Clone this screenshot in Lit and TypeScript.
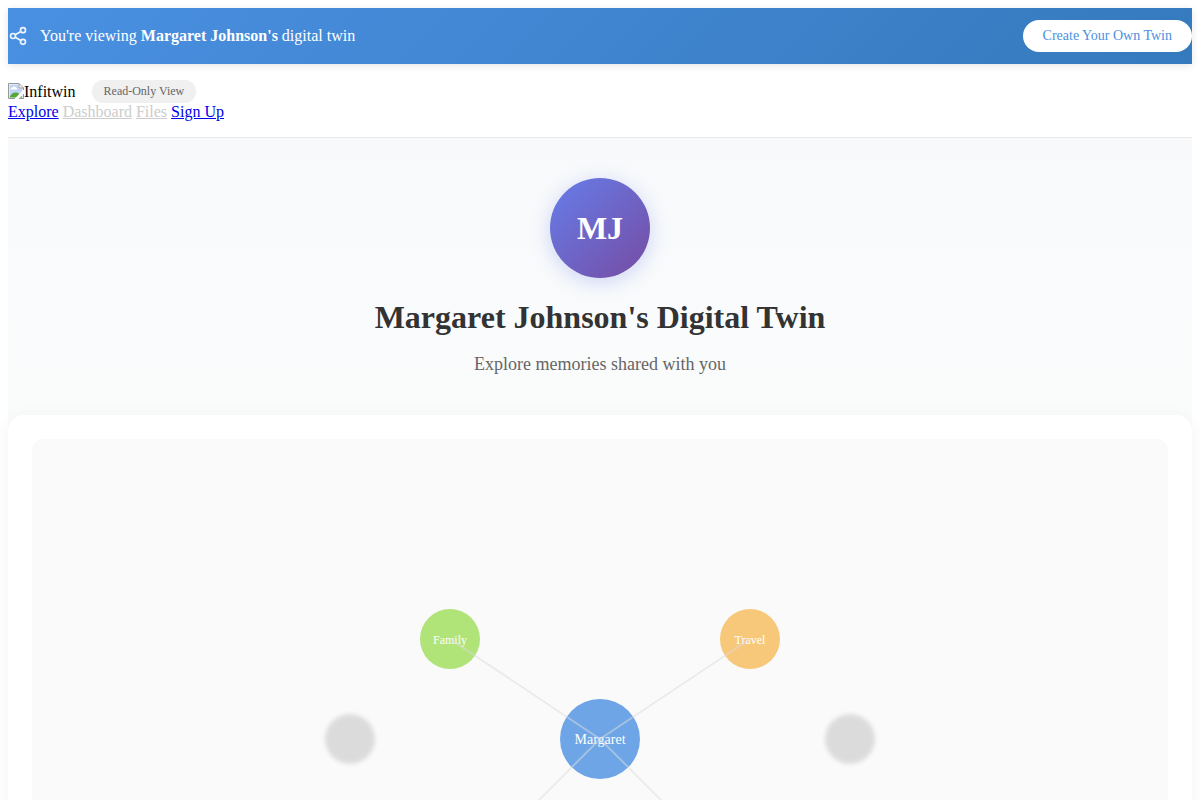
import { LitElement, html, css, svg } from "lit";
import { customElement } from "lit/decorators.js";

interface MemoryNode {
  x: number;
  y: number;
  r: number;
  label: string;
  kind: string;
  size: string;
}

const NODES: MemoryNode[] = [
  { x: 400, y: 300, r: 40, label: "Margaret", kind: "self", size: "large" },
  { x: 250, y: 200, r: 30, label: "Family", kind: "family", size: "small" },
  { x: 550, y: 200, r: 30, label: "Travel", kind: "travel", size: "small" },
];

const LOCKED = [
  { x: 150, y: 300 },
  { x: 650, y: 300 },
];

const LINKS = [
  { x: 250, y: 200 },
  { x: 550, y: 200 },
  { x: 250, y: 450 },
  { x: 550, y: 450 },
];

@customElement("memory-graph")
export class MemoryGraph extends LitElement {
  static styles = css`
    :host {
      display: flex;
      justify-content: center;
      height: 600px;
      border-radius: 12px;
      background: #fafafa;
      overflow: hidden;
    }
    .canvas {
      width: 800px;
      max-width: 100%;
      height: 100%;
    }
    .self {
      fill: #4a90e2;
      opacity: 0.8;
    }
    .family {
      fill: #7ed321;
      opacity: 0.6;
    }
    .travel {
      fill: #f5a623;
      opacity: 0.6;
    }
    .locked {
      fill: #cccccc;
      opacity: 0.65;
      filter: blur(2px);
    }
    .label {
      fill: #ffffff;
      text-anchor: middle;
      font-family: "Liberation Serif", "Times New Roman", serif;
    }
    .large {
      font-size: 14px;
    }
    .small {
      font-size: 12px;
    }
    .link {
      stroke: #dddddd;
      stroke-width: 2;
      opacity: 0.5;
    }
  `;

  render() {
    return html`
      <svg class="canvas" viewBox="0 0 800 600" role="img">
        ${NODES.map(
          (n) => svg`
            <circle class=${n.kind} cx=${n.x} cy=${n.y} r=${n.r}></circle>
            <text class="label ${n.size}" x=${n.x} y=${n.y + 5}>${n.label}</text>
          `
        )}
        ${LOCKED.map((n) => svg`<circle class="locked" cx=${n.x} cy=${n.y} r="25"></circle>`)}
        ${LINKS.map((n) => svg`<line class="link" x1="400" y1="300" x2=${n.x} y2=${n.y}></line>`)}
      </svg>
    `;
  }
}

@customElement("app-root")
export class AppRoot extends LitElement {
  static styles = css`
    :host {
      display: block;
      padding: 8px;
      background: #ffffff;
      color: #000000;
      font-family: "Liberation Serif", "Times New Roman", serif;
      font-size: 16px;
      line-height: 18px;
    }
    .banner {
      display: flex;
      align-items: center;
      justify-content: space-between;
      padding: 12px 0;
      background: linear-gradient(135deg, #4a90e2 0%, #357abd 100%);
      box-shadow: 0 2px 8px rgba(0, 0, 0, 0.1);
      color: #ffffff;
    }
    .notice {
      display: flex;
      align-items: center;
      gap: 12px;
    }
    .share {
      width: 20px;
      height: 20px;
      opacity: 0.9;
    }
    .create {
      padding: 8px 20px;
      border: none;
      border-radius: 20px;
      background: #ffffff;
      color: #4a90e2;
      font-family: inherit;
      font-size: 14px;
      line-height: 16px;
      cursor: pointer;
    }
    .header {
      padding: 16px 0;
      border-bottom: 1px solid #e8e8e8;
    }
    .brand {
      display: flex;
      align-items: center;
      gap: 16px;
    }
    .logo {
      display: flex;
      align-items: center;
      line-height: 19px;
    }
    .picture {
      width: 16px;
      height: 16px;
      margin-bottom: 1px;
    }
    .badge {
      padding: 4px 12px;
      border-radius: 12px;
      background: #f0f0f0;
      color: #666666;
      font-size: 12px;
      line-height: 15px;
    }
    .link {
      color: #0000ee;
    }
    .disabled {
      color: #cccccc;
    }
    .content {
      background: linear-gradient(180deg, #f8f9fb 0, #fafcfc 300px);
    }
    .hero {
      display: flex;
      flex-direction: column;
      align-items: center;
      padding: 40px 20px;
      text-align: center;
    }
    .avatar {
      display: flex;
      align-items: center;
      justify-content: center;
      width: 100px;
      height: 100px;
      margin-bottom: 20px;
      border-radius: 50%;
      background: linear-gradient(135deg, #667eea 0%, #764ba2 100%);
      box-shadow: 0 4px 20px rgba(102, 126, 234, 0.3);
      color: #ffffff;
      font-size: 32px;
      font-weight: bold;
      line-height: 36px;
    }
    .title {
      margin: 0 0 18px;
      color: #333333;
      font-size: 32px;
      line-height: 38px;
    }
    .subtitle {
      margin: 0;
      color: #666666;
      font-size: 18px;
      line-height: 21px;
    }
    .card {
      padding: 24px;
      border-radius: 16px;
      background: #ffffff;
      box-shadow: 0 4px 20px rgba(0, 0, 0, 0.05);
    }
  `;

  render() {
    return html`
      <div class="banner">
        <div class="notice">
          <svg class="share" viewBox="0 0 24 24" fill="none" stroke="currentColor" stroke-width="2" aria-hidden="true">
            <circle cx="18" cy="5" r="3"></circle>
            <circle cx="6" cy="12" r="3"></circle>
            <circle cx="18" cy="19" r="3"></circle>
            <path d="M8.59 13.51 15.42 17.49M15.41 6.51 8.59 10.49"></path>
          </svg>
          <span>You're viewing <strong>Margaret Johnson's</strong> digital twin</span>
        </div>
        <button class="create" type="button">Create Your Own Twin</button>
      </div>
      <header class="header">
        <div class="brand">
          <span class="logo">
            <svg class="picture" viewBox="0 0 16 16" aria-hidden="true">
              <path d="M.5.5h10.5l4.500 4.500v10.500H.5z" fill="#ffffff"></path>
              <path d="M1.500 1.500h9v4h4v9h-13z" fill="#c1d3f6"></path>
              <path d="M2.500 6.500c0-1.500 1-2 2-2 .5-1.500 3-1.500 3.500.2 1.500 0 1.500 1.800 0 1.800z" fill="#ffffff"></path>
              <path d="M1.500 14.500c1-3 3-5 6-5s5 2 7 5z" fill="#56a834"></path>
              <path d="M16 6 6.500 16h4L16 10.500z" fill="#ffffff"></path>
              <path d="M7 15.500H.5V.5h10.500l4.500 4.500v2M11 .5v4.500h4.500M11 15.500h4.500V11" fill="none" stroke="#999999"></path>
            </svg>
            <span>Infitwin</span>
          </span>
          <span class="badge">Read-Only View</span>
        </div>
        <nav>
          <a class="link" href="#explore">Explore</a>
          <a class="link disabled" href="#dashboard" aria-disabled="true">Dashboard</a>
          <a class="link disabled" href="#files" aria-disabled="true">Files</a>
          <a class="link" href="#signup">Sign Up</a>
        </nav>
      </header>
      <main class="content">
        <section class="hero">
          <div class="avatar">MJ</div>
          <h1 class="title">Margaret Johnson's Digital Twin</h1>
          <p class="subtitle">Explore memories shared with you</p>
        </section>
        <section class="card">
          <memory-graph></memory-graph>
        </section>
      </main>
    `;
  }
}
